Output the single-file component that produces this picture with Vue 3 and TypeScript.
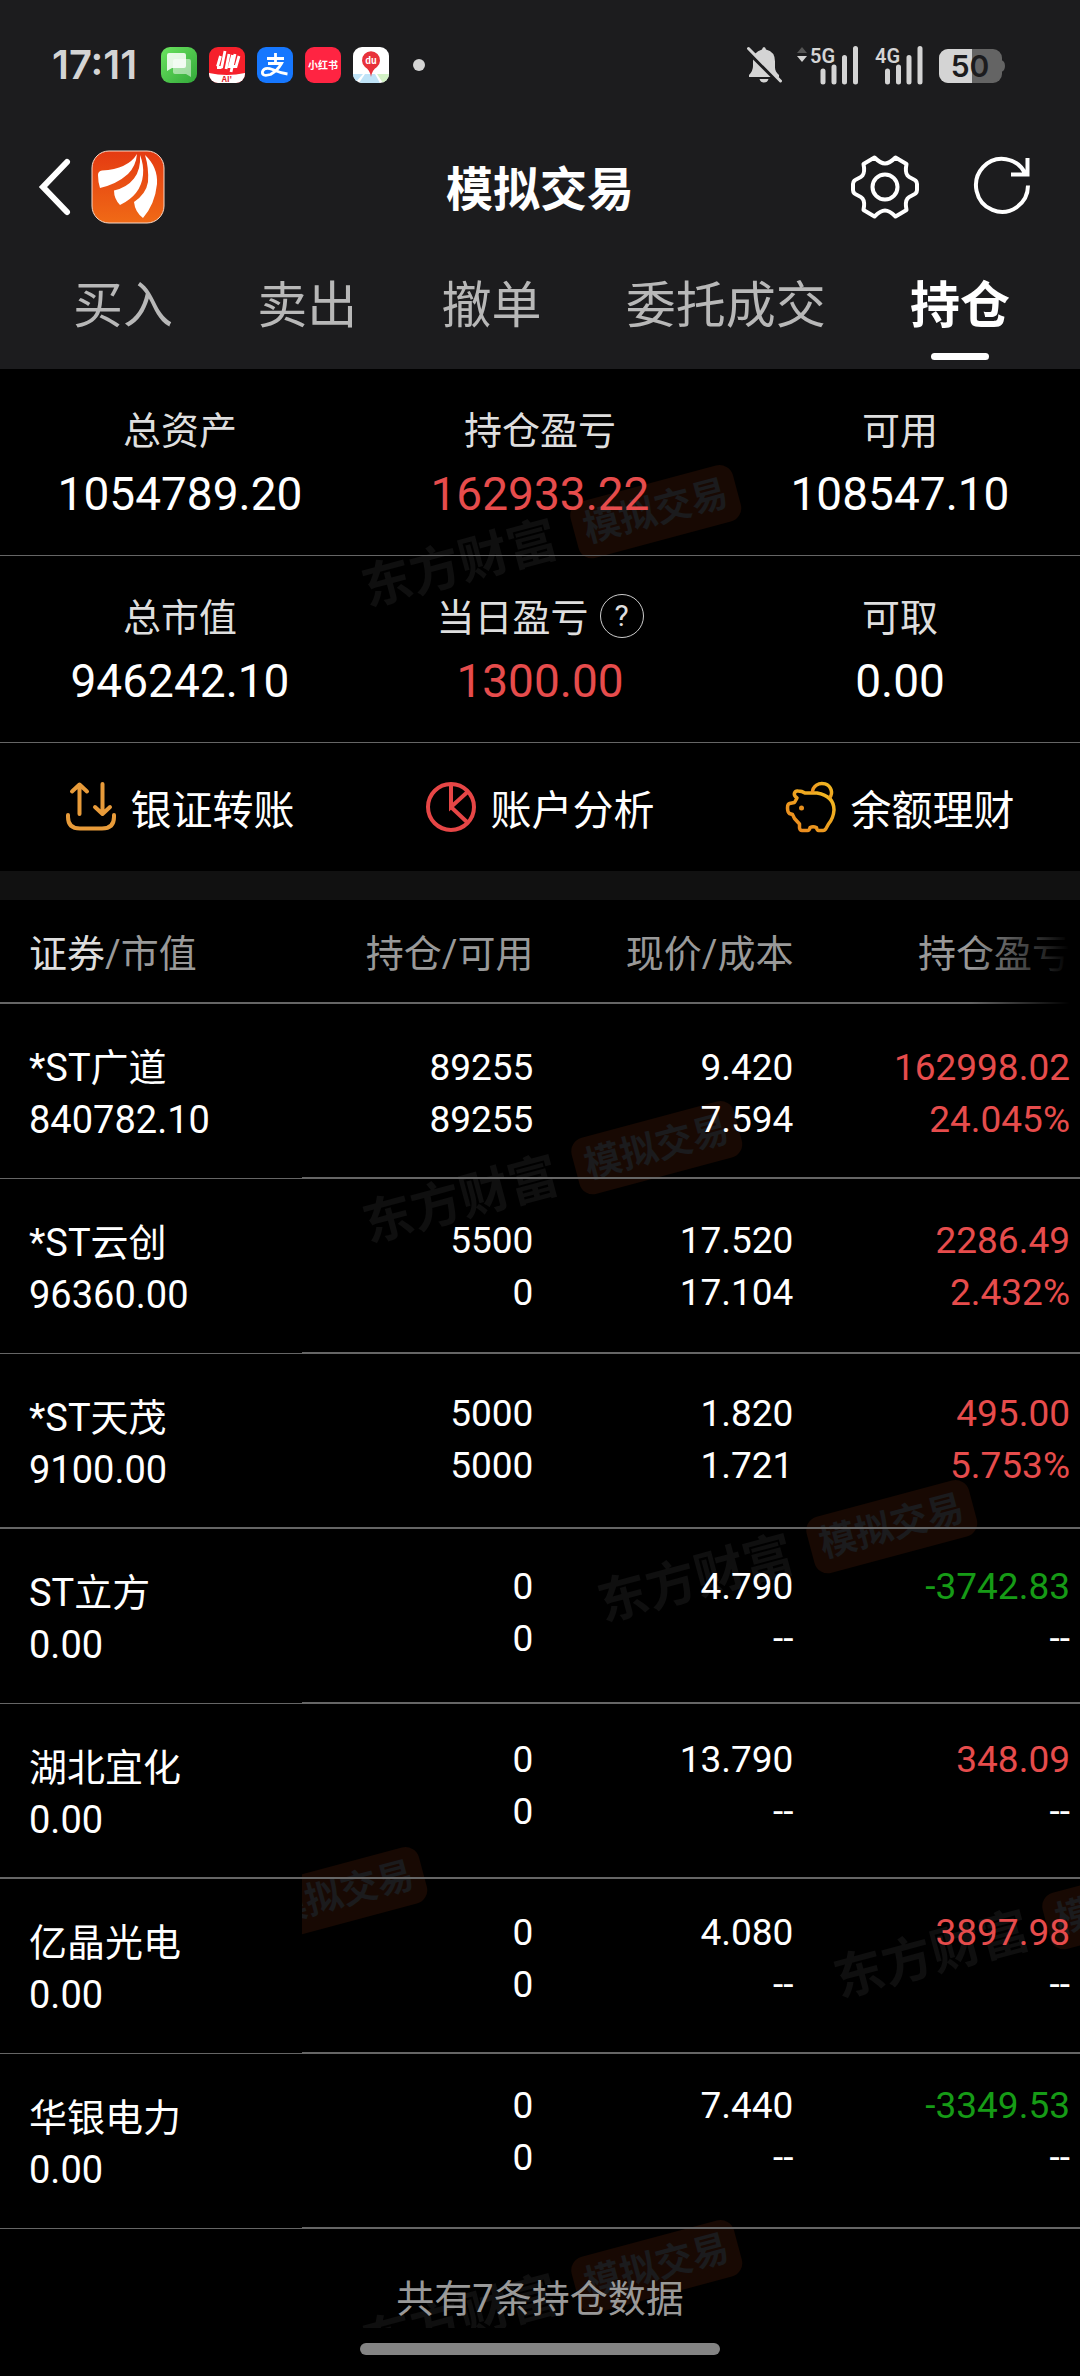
<script setup lang="ts">
import { ref } from 'vue'

type Tone = 'up' | 'down' | 'plain'

interface Holding {
  name: string
  marketValue: string
  held: string
  available: string
  price: string
  cost: string
  profit: string
  rate: string
  tone: Tone
}

interface Stat {
  label: string
  value: string
  tone: Tone
  help?: boolean
}

const tabs = ['买入', '卖出', '撤单', '委托成交', '持仓']
const active = ref('持仓')

const stats: Stat[][] = [
  [
    { label: '总资产', value: '1054789.20', tone: 'plain' },
    { label: '持仓盈亏', value: '162933.22', tone: 'up' },
    { label: '可用', value: '108547.10', tone: 'plain' },
  ],
  [
    { label: '总市值', value: '946242.10', tone: 'plain' },
    { label: '当日盈亏', value: '1300.00', tone: 'up', help: true },
    { label: '可取', value: '0.00', tone: 'plain' },
  ],
]

const holdings: Holding[] = [
  { name: '*ST广道', marketValue: '840782.10', held: '89255', available: '89255', price: '9.420', cost: '7.594', profit: '162998.02', rate: '24.045%', tone: 'up' },
  { name: '*ST云创', marketValue: '96360.00', held: '5500', available: '0', price: '17.520', cost: '17.104', profit: '2286.49', rate: '2.432%', tone: 'up' },
  { name: '*ST天茂', marketValue: '9100.00', held: '5000', available: '5000', price: '1.820', cost: '1.721', profit: '495.00', rate: '5.753%', tone: 'up' },
  { name: 'ST立方', marketValue: '0.00', held: '0', available: '0', price: '4.790', cost: '--', profit: '-3742.83', rate: '--', tone: 'down' },
  { name: '湖北宜化', marketValue: '0.00', held: '0', available: '0', price: '13.790', cost: '--', profit: '348.09', rate: '--', tone: 'up' },
  { name: '亿晶光电', marketValue: '0.00', held: '0', available: '0', price: '4.080', cost: '--', profit: '3897.98', rate: '--', tone: 'up' },
  { name: '华银电力', marketValue: '0.00', held: '0', available: '0', price: '7.440', cost: '--', profit: '-3349.53', rate: '--', tone: 'down' },
]

// Watermark centres, measured from the top left of the content area.
const marks = [
  { x: 550, y: 171 },
  { x: 551, y: 807 },
  { x: 786, y: 1186 },
  { x: 236, y: 1553 },
  { x: 1022, y: 1562 },
  { x: 551, y: 1926 },
]
</script>

<template>
  <div class="app">
    <header class="top">
      <div class="status">
        <span class="clock">17:11</span>
        <div class="notes">
          <svg class="note" viewBox="0 0 36 36" aria-hidden="true">
            <defs>
              <linearGradient id="msg" x1="0" y1="0" x2="1" y2="1">
                <stop offset="0" stop-color="#6be35f" />
                <stop offset="1" stop-color="#32a83a" />
              </linearGradient>
            </defs>
            <rect width="36" height="36" rx="9" fill="url(#msg)" />
            <path d="M14 12h14a2 2 0 0 1 2 2v16l-5-3H14a2 2 0 0 1-2-2V14a2 2 0 0 1 2-2z" fill="#fff" opacity=".5" />
            <path d="M8 6h15a2 2 0 0 1 2 2v11a2 2 0 0 1-2 2H11l-5 3V8a2 2 0 0 1 2-2z" fill="#fff" opacity=".85" />
          </svg>
          <svg class="note" viewBox="0 0 36 36" aria-hidden="true">
            <clipPath id="round"><rect width="36" height="36" rx="9" /></clipPath>
            <g clip-path="url(#round)">
              <rect width="36" height="36" fill="#f6202b" />
              <path d="M0 26q18 4 36 0v10H0z" fill="#fff" />
              <g fill="none" stroke="#fff" stroke-width="2.800">
                <path d="M11.500 9L8.500 19.500M16 4L12.500 21M12.500 20.500H8M20 7L17 22M23.500 8L20.500 19.500H24M26 7L22 25M30 9L27 19.500H24" />
              </g>
              <text x="18" y="35" text-anchor="middle" class="tiny ai">AI'</text>
            </g>
          </svg>
          <svg class="note" viewBox="0 0 36 36" aria-hidden="true">
            <rect width="36" height="36" rx="9" fill="#1677ff" />
            <g fill="none" stroke="#fff" stroke-width="2.800">
              <path d="M10 11.500h17M18.500 6v10M11 16.500h13.500q-4 7-11 11-9 2.500-8-3 2-5 10-2 8 3.500 15 4.500" />
            </g>
          </svg>
          <svg class="note" viewBox="0 0 36 36" aria-hidden="true">
            <rect width="36" height="36" rx="9" fill="#ff2442" />
            <text x="18" y="22" text-anchor="middle" class="tiny red-book">小红书</text>
          </svg>
          <svg class="note" viewBox="0 0 36 36" aria-hidden="true">
            <g clip-path="url(#round)">
              <rect width="36" height="36" fill="#fff" />
              <path d="M0 27h10l-8 9H0z" fill="#bfe3f7" />
              <path d="M12 27h10l5 9H6z" fill="#bfe3f7" />
              <path d="M24 27h12v9h-6z" fill="#d3f2c6" />
              <path d="M18 30q-1-7-6-10a9 9 0 1 1 12 0q-5 3-6 10z" fill="#e8323a" />
              <text x="18" y="17" text-anchor="middle" class="tiny du">du</text>
            </g>
          </svg>
        </div>
        <i class="more-dot"></i>
        <div class="signals">
          <svg width="36" height="38" viewBox="0 0 36 38" aria-hidden="true">
            <path d="M17 1q1.500 0 2 2.500 9 2 9 12v6q0 4 4 7.500v2H2v-2q4-4 4-9v-5q0-9 9-11.500 .5-2.500 2-2.500zM12.500 33h9q-1 3.500-4.500 3.500t-4.500-3.500z" fill="#d4d4d4" />
            <path d="M-2 2l34 34" stroke="#1c1c1e" stroke-width="5" />
            <path d="M1.500 2.500L33.500 35" stroke="#d4d4d4" stroke-width="3" stroke-linecap="round" />
          </svg>
          <svg width="64" height="38" viewBox="0 0 64 38" aria-hidden="true">
            <path d="M0 7l5-6 5 6z" fill="#555" />
            <path d="M0 10h10l-5 6z" fill="#d4d4d4" />
            <text x="13" y="17" class="net">5G</text>
            <path d="M26 25v11M37 21v15M47.500 11.500V36M58.500 2.500V36" class="bars" />
          </svg>
          <svg width="50" height="38" viewBox="0 0 50 38" aria-hidden="true">
            <text x="0" y="17" class="net">4G</text>
            <path d="M12.500 25v11M23.500 21v15M34 11.500V36M45 2.500V36" class="bars" />
          </svg>
          <svg width="66" height="38" viewBox="0 0 66 38" aria-hidden="true">
            <rect y="3" width="63" height="34" rx="9" fill="#646464" />
            <path d="M62 14q4 1 4 6t-4 6z" fill="#646464" />
            <path d="M9 3h24v34H9a9 9 0 0 1-9-9V12a9 9 0 0 1 9-9z" fill="#d4d4d4" />
            <text x="31" y="31" text-anchor="middle" class="charge">50</text>
          </svg>
        </div>
      </div>

      <div class="bar">
        <div class="side">
          <button class="icon-btn" aria-label="返回">
            <svg width="34" height="58" viewBox="0 0 34 58">
              <path d="M29 4L5 29l24 25" fill="none" stroke="#fff" stroke-width="6" stroke-linecap="round" />
            </svg>
          </button>
          <svg width="74" height="74" viewBox="0 0 74 74" aria-hidden="true">
            <defs>
              <linearGradient id="brand" x1="0" y1="0" x2="0" y2="1">
                <stop offset="0" stop-color="#e43a12" />
                <stop offset="1" stop-color="#f06a16" />
              </linearGradient>
            </defs>
            <rect x="1" y="1" width="72" height="72" rx="17" fill="url(#brand)" stroke="#f9d9c8" />
            <g fill="#fff">
              <path d="M7 25q0-4 4-4.500Q37 19 46 4q-1 12-9 20-11 10-28 14-2-6-2-13z" />
              <path d="M49 5q4 10 3 20-2 20-23 30-6-6-6-14.500 13-3 20-12 7-9 6-23.500z" />
              <path d="M54 5Q67 17 66 34q-2 20-14 34-8-6-9-16 12-8 14-20 1-14-3-27z" />
            </g>
          </svg>
        </div>
        <h1>模拟交易</h1>
        <div class="side end">
          <button class="icon-btn" aria-label="设置">
            <svg width="68" height="68" viewBox="-34 -34 68 68" fill="none" stroke="#fff" stroke-width="4" stroke-linejoin="round">
              <path d="M-10.500-29.500C-7-26-4-23.500 0-23.500S7-26 10.500-29.500L21.500-23C20.500-18 20.500-14 22.500-11.500S28-8.500 30.500-6.500Q32-5 32-3V3Q32 5 30.500 6.500C28 8.500 24.500 9 22.500 11.500S20.500 18 21.500 23L10.500 29.500C7 26 4 23.500 0 23.500S-7 26-10.500 29.500L-21.500 23C-20.500 18-20.500 14-22.500 11.500S-28 8.500-30.500 6.500Q-32 5-32 3V-3Q-32-5-30.500-6.500C-28-8.500-24.500-9-22.500-11.500S-20.500-18-21.500-23Z" />
              <circle r="12.500" />
            </svg>
          </button>
          <button class="icon-btn" aria-label="刷新">
            <svg width="58" height="60" viewBox="-29 -28 58 60" fill="none" stroke="#fff" stroke-width="4">
              <path d="M26 .5A26 26.500 0 1 1 23.500-11M25.500-27V-10.500H9" />
            </svg>
          </button>
        </div>
      </div>

      <nav class="tabs">
        <button v-for="t in tabs" :key="t" :class="['tab', { on: t === active }]" @click="active = t">{{ t }}</button>
      </nav>
    </header>

    <main class="content">
      <div class="marks" aria-hidden="true">
        <div v-for="(m, i) in marks" :key="i" class="mark" :style="{ left: m.x + 'px', top: m.y + 'px' }">
          <b>东方财富</b><em>模拟交易</em>
        </div>
      </div>

      <section v-for="(row, i) in stats" :key="i" class="stats">
        <div v-for="s in row" :key="s.label" class="stat">
          <div class="label">{{ s.label }}<button v-if="s.help" class="help" aria-label="说明">?</button></div>
          <div :class="['value', s.tone]">{{ s.value }}</div>
        </div>
      </section>

      <section class="links">
        <a href="#">
          <svg width="50" height="50" viewBox="0 0 50 50" fill="none" stroke="#e89b3a" stroke-width="4" stroke-linecap="round" stroke-linejoin="round">
            <path d="M13.500 3v29M6 9.500L13.500 2.500 21 9.500M36.500 2v29M29 25l7.500 7 7.500-7" />
            <path d="M2 33v2q0 11.500 12 11.500h22q12 0 12-11.500v-2" />
          </svg>
          银证转账
        </a>
        <a href="#">
          <svg width="50" height="50" viewBox="0 0 50 50" fill="none" stroke="#e64646" stroke-width="4">
            <circle cx="25" cy="25" r="23" />
            <path d="M25 2v23L42 9.500M25 25l16.500 15.500" />
          </svg>
          账户分析
        </a>
        <a href="#">
          <svg width="50" height="50" viewBox="0 0 50 50" fill="none" stroke="url(#gold)" stroke-width="3.500" stroke-linejoin="round">
            <defs>
              <linearGradient id="gold" x1="1" y1="0" x2="0" y2="1">
                <stop offset="0" stop-color="#f3bd22" />
                <stop offset="1" stop-color="#e8831e" />
              </linearGradient>
            </defs>
            <path d="M8.500 20.500L11 16Q7.500 13.500 8.500 11T12 9q4 0 7 2h12Q48 14 48 28 47.500 36 42.500 42L40 46.500Q39 48.500 37 48.500H32.500Q31 48.500 30.500 45.500 27 44 24 45.500 23.500 48.500 21.500 48.500H16Q14 48.500 13.500 46V42L8.500 36.500 6.500 32.500 3.500 31.500Q1.500 30 1.500 26T3.500 21.500Z" />
            <path d="M26.500 10.500A9.500 9 0 1 1 43.500 16" />
            <circle cx="15.500" cy="26" r="2.500" fill="#e8901e" stroke="none" />
          </svg>
          余额理财
        </a>
      </section>

      <div class="band"></div>

      <div class="holdings">
        <table class="names">
          <thead>
            <tr><th scope="col"><span class="lit">证券</span>/市值</th></tr>
          </thead>
          <tbody>
            <tr v-for="h in holdings" :key="h.name">
              <td>{{ h.name }}<br />{{ h.marketValue }}</td>
            </tr>
          </tbody>
        </table>
        <div class="figures">
          <table>
            <thead>
              <tr>
                <th scope="col">持仓/可用</th>
                <th scope="col">现价/成本</th>
                <th scope="col">持仓盈亏</th>
              </tr>
            </thead>
            <tbody>
              <tr v-for="h in holdings" :key="h.name">
                <td>{{ h.held }}<br />{{ h.available }}</td>
                <td>{{ h.price }}<br />{{ h.cost }}</td>
                <td>
                  <span :class="h.tone">{{ h.profit }}</span><br />
                  <span :class="h.rate === '--' ? 'plain' : h.tone">{{ h.rate }}</span>
                </td>
              </tr>
            </tbody>
          </table>
        </div>
      </div>

      <p class="total">共有{{ holdings.length }}条持仓数据</p>
    </main>

    <footer class="home"><i></i></footer>
  </div>
</template>

<style>
body {
  background: #000;
}
</style>

<style scoped>
.app {
  min-height: 100vh;
  background: #000;
  color: #fff;
  font-family: Roboto, "Noto Sans CJK SC", sans-serif;
  font-size: 38px;
  overflow: hidden;
}
button {
  border: 0;
  padding: 0;
  margin: 0;
  background: none;
  color: inherit;
  font: inherit;
}
svg {
  display: block;
  flex: none;
  overflow: visible;
}
.top {
  background: #1c1c1e;
}
.status {
  display: flex;
  align-items: center;
  height: 130px;
  padding: 0 75px 0 52px;
}
.clock {
  width: 109px;
  font: 600 40px/48px Inter, sans-serif;
  color: #d4d4d4;
}
.notes {
  display: flex;
  gap: 12px;
}
.note {
  width: 36px;
  height: 36px;
}
.tiny {
  font-family: "Noto Sans CJK SC", sans-serif;
  font-weight: 700;
  fill: #fff;
}
.ai {
  font-size: 8px;
  fill: #e02028;
}
.red-book {
  font-size: 10px;
}
.du {
  font-size: 9px;
}
.more-dot {
  width: 12px;
  height: 12px;
  margin-left: 24px;
  border-radius: 50%;
  background: #d4d4d4;
}
.signals {
  display: flex;
  gap: 14px;
  margin-left: auto;
}
.net {
  font: 600 20px Roboto, sans-serif;
  fill: #d4d4d4;
}
.bars {
  stroke: #d4d4d4;
  stroke-width: 5;
  stroke-linecap: round;
}
.charge {
  font: 600 30px Inter, sans-serif;
  fill: #1c1c1e;
}
.bar {
  display: grid;
  grid-template-columns: 1fr auto 1fr;
  align-items: center;
  height: 114px;
  padding: 0 38px;
}
.side {
  display: flex;
  align-items: center;
  gap: 19px;
}
.end {
  justify-content: flex-end;
  gap: 54px;
  padding-right: 11px;
}
.icon-btn {
  display: block;
}
h1 {
  margin: 0;
  padding-top: 5px;
  font-size: 47px;
  line-height: 60px;
  font-weight: 700;
}
.tabs {
  display: flex;
  justify-content: space-between;
  padding: 0 70px 0 73px;
}
.tab {
  position: relative;
  height: 125px;
  padding-bottom: 2px;
  font-size: 50px;
  line-height: 60px;
  color: #b8b8b8;
}
.tab.on {
  color: #fff;
  font-weight: 700;
}
.tab.on::after {
  content: "";
  position: absolute;
  left: 50%;
  bottom: 9px;
  width: 58px;
  height: 7px;
  border-radius: 4px;
  background: #fff;
  transform: translateX(-50%);
}
.content {
  position: relative;
  overflow: hidden;
}
.marks {
  position: absolute;
  inset: 0;
}
.mark {
  position: absolute;
  display: flex;
  align-items: center;
  gap: 19px;
  white-space: nowrap;
  transform: translate(-50%, -50%) rotate(-15deg);
}
.mark b {
  font-size: 50px;
  line-height: 60px;
  color: #0f0f0f;
}
.mark em {
  padding: 0 10px;
  border-radius: 14px;
  background: #180903;
  color: #1b1b1d;
  font-size: 37px;
  line-height: 58px;
  font-style: normal;
  font-weight: 700;
}
.stats,
.links,
.holdings,
.total {
  position: relative;
}
.stats {
  display: flex;
  padding: 32px 0 30px;
  border-bottom: 1px solid #666;
}
.stat {
  flex: 1;
  text-align: center;
}
.label {
  display: flex;
  align-items: center;
  justify-content: center;
  gap: 11px;
  height: 52px;
  margin-bottom: 10px;
  color: #dedede;
}
.help {
  width: 44px;
  height: 44px;
  margin-top: 4px;
  border: 1px solid #ccc;
  border-radius: 50%;
  font-size: 30px;
  line-height: 42px;
}
.value {
  font-size: 46px;
  line-height: 62px;
}
.plain {
  color: #fff;
}
.up {
  color: #e64c4c;
}
.down {
  color: #169b16;
}
.links {
  display: flex;
  height: 128px;
}
.links a {
  display: flex;
  flex: 1;
  align-items: center;
  justify-content: center;
  gap: 15px;
  color: #fff;
  font-size: 41px;
  text-decoration: none;
}
.band {
  position: relative;
  height: 29px;
  background: #111;
}
.holdings {
  display: flex;
  align-items: flex-start;
}
table {
  width: 100%;
  border-collapse: separate;
  border-spacing: 0;
  table-layout: fixed;
}
th,
td {
  box-sizing: border-box;
  padding: 0;
  line-height: 52px;
  vertical-align: top;
}
th {
  height: 104px;
  padding-top: 28px;
  border-bottom: 2px solid #666;
  color: #999;
  font-weight: 400;
}
td {
  padding-top: 38px;
}
.names {
  width: 28%;
  background: #000;
  text-align: left;
}
.names th,
.names td {
  padding-left: 29px;
}
.names td {
  height: 175px;
  border-bottom: 1px solid #666;
}
.names tr:nth-child(3) td,
.names tr:nth-child(5) td {
  border-bottom-width: 2px;
}
.lit {
  color: #dedede;
}
.figures {
  position: relative;
  flex: 1;
  align-self: stretch;
  text-align: right;
}
/* Row rules keep the pitch of the fixed column beside them. */
.figures::before {
  content: "";
  position: absolute;
  inset: 104px 0 0;
  background: repeating-linear-gradient(transparent 0 173px, #666 173px 175px);
}
.figures::after {
  content: "";
  position: absolute;
  top: 0;
  right: 0;
  width: 110px;
  height: 104px;
  background: linear-gradient(90deg, transparent, #000 90%);
}
.figures table {
  position: relative;
}
.figures th:nth-child(1) {
  width: 231px;
}
.figures th:nth-child(2) {
  width: 260px;
}
.figures th:nth-child(3),
.figures td:nth-child(3) {
  padding-right: 10px;
}
.figures td {
  height: 173px;
  font-size: 37px;
}
.total {
  margin: 0;
  padding: 44px 0 3px;
  line-height: 52px;
  text-align: center;
  color: #999;
}
.home {
  display: flex;
  justify-content: center;
  padding: 15px 0 21px;
}
.home i {
  width: 33.333%;
  height: 12px;
  border-radius: 6px;
  background: #848484;
}
</style>
